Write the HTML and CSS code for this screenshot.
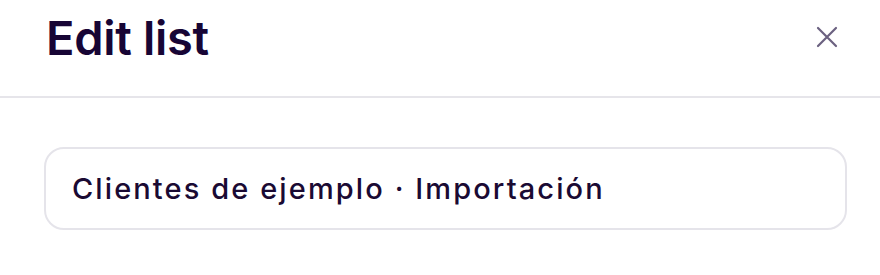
FILE: index.html
```html
<!DOCTYPE html>
<html lang="es">
<head>
<meta charset="utf-8">
<title>Edit list</title>
<link rel="stylesheet" href="styles.css">
</head>
<body>
<div class="dialog">
  <header class="header">
    <h1 class="title">Edit list</h1>
    <button class="close" aria-label="Close">
      <svg width="22" height="22" viewBox="0 0 22 22" fill="none" stroke="#6b6180" stroke-width="2.2" stroke-linecap="round">
        <path d="M2 2L20 20M20 2L2 20"/>
      </svg>
    </button>
  </header>
  <div class="body">
    <div class="field">Clientes de ejemplo · Importación</div>
  </div>
</div>
</body>
</html>
```
FILE: styles.css
```css
* { box-sizing: border-box; }
html, body { margin: 0; padding: 0; background: #fff; }
body { font-family: Inter, "Noto Sans", sans-serif; color: #170535; }
.dialog { width: 880px; }
.header {
  display: flex;
  align-items: center;
  justify-content: space-between;
  height: 98px;
  padding: 0 42px 0 46px;
  border-bottom: 2px solid #e6e5ea;
}
.title {
  margin: 0;
  font-size: 47px;
  font-weight: 600;
  letter-spacing: -0.3px;
  line-height: 1;
  padding-bottom: 22px;
}
.close {
  background: none;
  border: 0;
  padding: 0;
  width: 22px;
  height: 22px;
  margin-bottom: 22px;
  display: flex;
}
.body { padding: 49px 33px 0 44px; }
.field {
  height: 83px;
  border: 2px solid #e5e4ea;
  border-radius: 20px;
  display: flex;
  align-items: center;
  padding: 0 25px 0 26px;
  font-size: 29px;
  font-weight: 500;
  letter-spacing: 2.1px;
  color: #1a0a33;
}
```
